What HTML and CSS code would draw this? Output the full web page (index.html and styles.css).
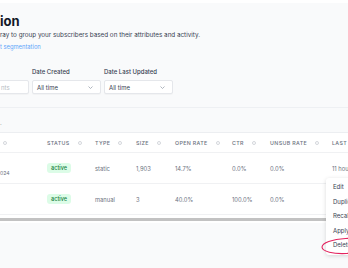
FILE: index.html
```html
<!DOCTYPE html>
<html lang="en">
    <head>
        <meta charset="UTF-8" />
        <meta name="viewport" content="width=device-width, initial-scale=1.0" />
        <title>Segments</title>
        <link rel="stylesheet" href="styles.css">
    </head>
    <body>
        <div class="topbar"></div>
        <header class="page-head">
            <h1 class="page-title">ion</h1>
            <p class="page-desc">ray to group your subscribers based on their attributes and activity.</p>
            <a class="page-link" href="#">t segmentation</a>
        </header>

        <div class="filters">
            <div class="filter filter-search">
                <div class="field">nts</div>
            </div>
            <div class="filter">
                <label class="filter-label">Date Created</label>
                <div class="field select">
                    <span>All time</span>
                    <svg class="chevron" width="5" height="3" viewBox="0 0 5 3"><path d="M0.5 0.5 L2.5 2.5 L4.5 0.5" fill="none" stroke="#9ca3af" stroke-width="0.8"/></svg>
                </div>
            </div>
            <div class="filter">
                <label class="filter-label">Date Last Updated</label>
                <div class="field select">
                    <span>All time</span>
                    <svg class="chevron" width="5" height="3" viewBox="0 0 5 3"><path d="M0.5 0.5 L2.5 2.5 L4.5 0.5" fill="none" stroke="#9ca3af" stroke-width="0.8"/></svg>
                </div>
            </div>
        </div>

        <div class="note">.</div>

        <div class="table-wrap">
            <div class="table">
                <div class="row row-head">
                    <div class="cell"><span class="sort"></span></div>
                    <div class="cell">STATUS<span class="sort"></span></div>
                    <div class="cell">TYPE<span class="sort"></span></div>
                    <div class="cell">SIZE<span class="sort"></span></div>
                    <div class="cell">OPEN RATE<span class="sort"></span></div>
                    <div class="cell">CTR<span class="sort"></span></div>
                    <div class="cell">UNSUB RATE<span class="sort"></span></div>
                    <div class="cell">LAST UPDATED</div>
                </div>
                <div class="row">
                    <div class="cell cell-name"><span class="date">024</span></div>
                    <div class="cell"><span class="badge">active</span></div>
                    <div class="cell">static</div>
                    <div class="cell">1,903</div>
                    <div class="cell">14.7%</div>
                    <div class="cell">0.0%</div>
                    <div class="cell">0.0%</div>
                    <div class="cell">11 hours ago</div>
                </div>
                <div class="row">
                    <div class="cell cell-name"></div>
                    <div class="cell"><span class="badge">active</span></div>
                    <div class="cell">manual</div>
                    <div class="cell">3</div>
                    <div class="cell">40.0%</div>
                    <div class="cell">100.0%</div>
                    <div class="cell">0.0%</div>
                    <div class="cell"></div>
                </div>
            </div>
            <div class="scrollbar"><div class="scrollbar-thumb"></div></div>
        </div>

        <ul class="menu">
            <li class="menu-item">Edit</li>
            <li class="menu-item">Duplicate</li>
            <li class="menu-item">Recalculate</li>
            <li class="menu-item">Apply filters</li>
            <li class="menu-item">Delete</li>
        </ul>

        <svg class="annotation" width="40" height="20" viewBox="0 0 40 20">
            <ellipse cx="26" cy="10" rx="24" ry="7.5" fill="none" stroke="#e3245f" stroke-width="1.1" transform="rotate(-3 26 10)"/>
        </svg>
    </body>
</html>
```

FILE: styles.css
```css
html,
body,
h1,
p,
ul,
li {
    padding: 0;
    margin: 0;
}
ul,
li {
    list-style: none;
}
body {
    width: 348px;
    height: 268px;
    overflow: hidden;
    position: relative;
    background-color: #f9fafb;
    font-family: Inter, "Liberation Sans", sans-serif;
    color: #374151;
}

.topbar {
    height: 3px;
    background-color: #fff;
}

.page-head {
    padding-top: 11px;
}
.page-title {
    font-size: 13px;
    line-height: 15px;
    font-weight: 700;
    color: #111827;
}
.page-desc {
    margin-top: 2px;
    font-size: 6.3px;
    line-height: 9px;
    color: #374151;
}
.page-link {
    display: block;
    margin-top: 3px;
    font-size: 5.8px;
    line-height: 8px;
    color: #60a5fa;
    text-decoration: none;
}

.filters {
    display: flex;
    align-items: flex-end;
    gap: 3px;
    margin-top: 17px;
    padding-bottom: 13px;
    border-bottom: 1px solid #eef0f3;
}
.filter-label {
    display: block;
    margin-bottom: 4px;
    font-size: 6px;
    line-height: 8px;
    font-weight: 500;
    color: #374151;
}
.field {
    box-sizing: border-box;
    height: 14px;
    width: 69px;
    display: flex;
    align-items: center;
    justify-content: space-between;
    padding: 0 7px 0 4px;
    background-color: #fff;
    border: 1px solid #e5e7eb;
    border-radius: 2px;
    box-shadow: 0 1px 1px rgba(0, 0, 0, 0.03);
    font-size: 6px;
}
.filter-search .field {
    width: 39px;
    margin-left: -10px;
    padding-left: 10px;
    color: #b6bbc3;
}

.note {
    margin-top: 11px;
    font-size: 6px;
    line-height: 8px;
    color: #6b7280;
}

.table-wrap {
    margin-top: 5px;
    width: 400px;
    background-color: #fff;
    border-top: 1px solid #eceef1;
}
.row {
    display: grid;
    grid-template-columns: 47px 48px 41px 39px 57px 38px 62px 1fr;
    align-items: center;
    height: 30px;
    border-bottom: 1px solid #f0f1f3;
    font-size: 5.8px;
    color: #6b7280;
}
.row-head {
    height: 19px;
    font-size: 5.3px;
    font-weight: 500;
    letter-spacing: 0.35px;
    color: #6b7280;
}
.row-head .cell {
    display: flex;
    align-items: center;
    gap: 8px;
}
.row-head .cell:first-child {
    padding-left: 3px;
}
.sort {
    width: 4px;
    height: 4px;
    border-radius: 50%;
    border: 1px solid #d4d7dc;
    box-sizing: border-box;
}
.cell-name .date {
    position: relative;
    top: 4px;
    font-size: 5.2px;
}
.badge {
    display: inline-block;
    width: 24px;
    line-height: 10px;
    text-align: center;
    border-radius: 3px;
    background-color: #dcfce7;
    color: #15803d;
    font-size: 5.5px;
    font-weight: 500;
}
.scrollbar {
    padding: 3px 0 2px;
    background-color: #fff;
}
.scrollbar-thumb {
    height: 3px;
    background-color: #c2c2c2;
}

.menu {
    position: absolute;
    left: 326px;
    top: 178px;
    width: 44px;
    padding: 2px 0;
    background-color: #fff;
    border-radius: 3px;
    box-shadow: 0 1px 4px rgba(0, 0, 0, 0.15);
}
.menu-item {
    padding-left: 7px;
    line-height: 14.5px;
    font-size: 6px;
    color: #374151;
    white-space: nowrap;
}

.annotation {
    position: absolute;
    left: 320px;
    top: 236px;
}
```
